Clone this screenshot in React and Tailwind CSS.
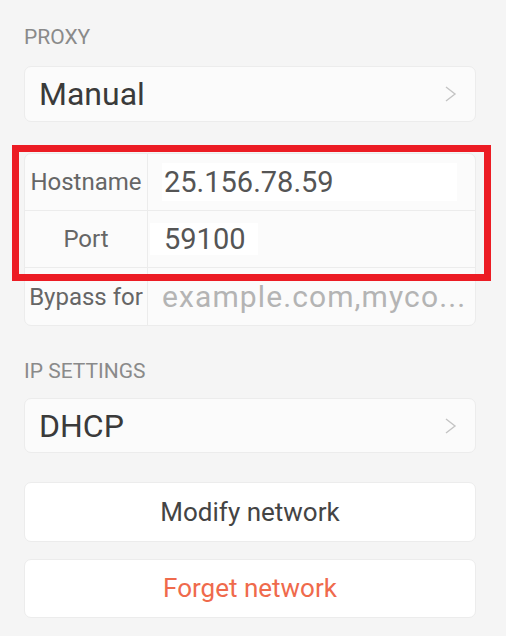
import React from 'react';

function Chevron() {
  return (
    <svg width="12" height="16" viewBox="0 0 12 16" className="shrink-0">
      <polyline points="1,1 10,8 1,15" fill="none" stroke="#c4c4c4" strokeWidth="1.4" />
    </svg>
  );
}

function SectionLabel({ children, className = '' }) {
  return (
    <div className={`text-[21px] leading-[20px] text-[#8a8a8a] ${className}`}>{children}</div>
  );
}

function SelectCard({ value, className = '' }) {
  return (
    <div className={`flex items-center justify-between pl-[14px] pr-[18px] bg-[#fbfbfb] border border-[#ececec] rounded-[7px] ${className}`}>
      <span className="text-[32px] text-[#3a3a3a] leading-none">{value}</span>
      <Chevron />
    </div>
  );
}

function FieldRow({ label, children, last }) {
  return (
    <div className={`flex h-[57px] ${last ? '' : 'border-b border-[#ececec]'}`}>
      <div className="w-[123px] shrink-0 flex items-center justify-center border-r border-[#ececec] text-[24px] text-[#666]">
        {label}
      </div>
      <div className="flex-1 flex items-center min-w-0">{children}</div>
    </div>
  );
}

export default function App() {
  return (
    <div className="w-[506px] h-[636px] bg-[#f5f5f5] pl-[24px] pr-[30px] overflow-hidden" style={{ fontFamily: 'Roboto, "Noto Sans", sans-serif' }}>
      <SectionLabel className="pt-[27px]">PROXY</SectionLabel>
      <SelectCard value="Manual" className="mt-[19px] h-[56px]" />

      {/* proxy fields, with the red annotation frame over them */}
      <div className="relative mt-[31px]">
        <div className="bg-[#fbfbfb] border border-[#ececec] rounded-[7px]">
          <FieldRow label="Hostname">
            <div className="ml-[14px] w-[295px] h-[38px] bg-white flex items-center pl-[2px] text-[29px] text-[#555] leading-none">
              25.156.78.59
            </div>
          </FieldRow>
          <FieldRow label="Port">
            <div className="ml-[2px] w-[108px] h-[32px] bg-white flex items-center pl-[14px] text-[29px] text-[#555] leading-none">
              59100
            </div>
          </FieldRow>
          <FieldRow label="Bypass for" last>
            <span className="ml-[14px] text-[30px] tracking-[1.1px] text-[#b4b4b4] whitespace-nowrap leading-none">
              example.com,myco...
            </span>
          </FieldRow>
        </div>
        <div className="absolute left-[-12px] top-[-8px] w-[479px] h-[136px] border-[7px] border-[#ec1c24] pointer-events-none" />
      </div>

      <SectionLabel className="mt-[35px]">IP SETTINGS</SectionLabel>
      <SelectCard value="DHCP" className="mt-[17px] h-[55px]" />

      <div className="mt-[29px] h-[60px] flex items-center justify-center bg-white border border-[#ececec] rounded-[7px] text-[26px] text-[#444]">
        Modify network
      </div>
      <div className="mt-[17px] h-[59px] flex items-center justify-center bg-white border border-[#ececec] rounded-[7px] text-[26px] text-[#ef6a4c]">
        Forget network
      </div>
    </div>
  );
}
